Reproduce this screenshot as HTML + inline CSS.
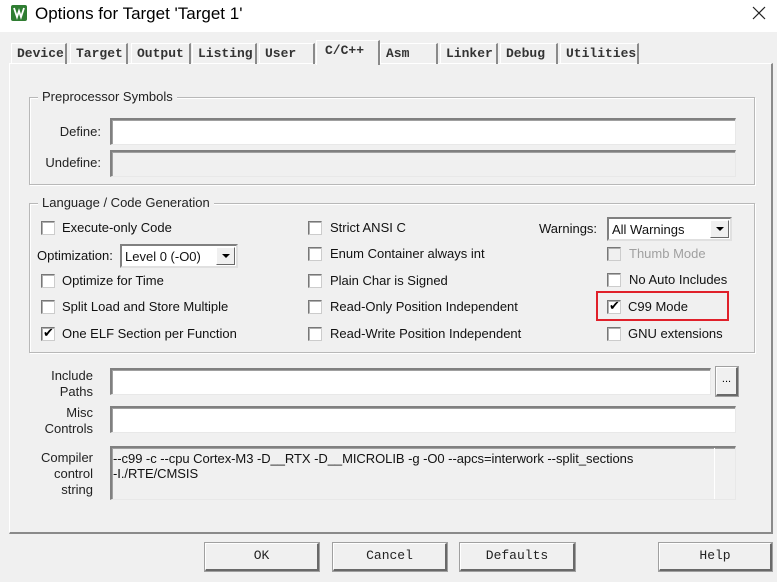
<!DOCTYPE html>
<html><head><meta charset="utf-8"><style>
*{margin:0;padding:0;box-sizing:border-box}
body{width:777px;height:582px;background:#f0f0f0;position:relative;overflow:hidden;font-family:"Liberation Sans",sans-serif;font-size:13px;color:#000;letter-spacing:0}
.a{position:absolute}
.title{left:0;top:0;width:777px;height:32px;background:#fff}
.tab{position:absolute;top:43px;height:21px;font-family:"Liberation Mono",monospace;font-size:13px;font-weight:bold;letter-spacing:0;padding-left:5px;line-height:20px;border-top:1px solid #fff;border-left:1px solid #fff;border-right:2px solid #8a8a8a;color:#333}
.grp{position:absolute;border:1px solid #b8b8b8;box-shadow:inset 1px 1px 0 #fff,1px 1px 0 #fff}
.lg{position:absolute;background:#f0f0f0;padding:0 4px;top:-9px;left:8px;color:#222}
.in{position:absolute;background:#fff;border-top:2px solid #808080;border-left:2px solid #808080;border-bottom:1px solid #e8e8e8;border-right:1px solid #e8e8e8;box-shadow:inset 1px 1px 0 #a0a0a0}
.cb{position:absolute;width:14px;height:14px;background:#fff;border:1px solid #777;border-right-color:#ccc;border-bottom-color:#ccc;box-shadow:inset 1px 1px 0 #b0b0b0}
.lbl{position:absolute;white-space:nowrap;color:#111}
.btn{position:absolute;border:1px solid #fff;border-right:2px solid #696969;border-bottom:2px solid #696969;outline:1px solid #a0a0a0;text-align:center;font-family:"Liberation Mono",monospace;font-size:13px;letter-spacing:0;line-height:24px;color:#222}
.rl{position:absolute;text-align:right;line-height:16px;width:60px;color:#222}
.combo{position:absolute;background:#fff;border:2px solid #808080;border-right-color:#e0e0e0;border-bottom-color:#e0e0e0}
.arr{position:absolute;right:1px;top:1px;width:19px;height:18px;background:#f0f0f0;border:1px solid #fff;border-right-color:#696969;border-bottom-color:#696969}
.arr:after{content:"";position:absolute;left:5px;top:6px;border-left:4px solid transparent;border-right:4px solid transparent;border-top:4px solid #000}
.ck:after{content:"✔";position:absolute;left:1px;top:-3px;font-size:13px;color:#000}
</style></head><body>
<div class="a title"></div>
<svg class="a" style="left:11px;top:5px" width="16" height="16" viewBox="0 0 16 16"><rect width="16" height="16" rx="2" fill="#2f7d32"/><path d="M3 3 L6 12 L8 6 L10 12 L13 3" stroke="#fff" stroke-width="1.8" fill="none"/></svg>
<div class="a" style="left:35px;top:4px;font-size:17px;letter-spacing:0;color:#000">Options for Target 'Target 1'</div>
<svg class="a" style="left:752px;top:6px" width="14" height="14"><path d="M1 1L13 13M13 1L1 13" stroke="#222" stroke-width="1.2"/></svg>

<div class="a" style="left:9px;top:63px;width:764px;height:471px;border-left:1px solid #fff;border-top:1px solid #fff;border-right:2px solid #8a8a8a;border-bottom:2px solid #8a8a8a"></div>
<div class="tab" style="left:11px;width:56px">Device</div>
<div class="tab" style="left:70px;width:58px">Target</div>
<div class="tab" style="left:131px;width:60px">Output</div>
<div class="tab" style="left:192px;width:65px">Listing</div>
<div class="tab" style="left:259px;width:56px">User</div>
<div class="tab" style="left:316px;top:40px;height:25px;width:64px;background:#f0f0f0;padding-left:8px;z-index:2">C/C++</div>
<div class="tab" style="left:380px;width:58px">Asm</div>
<div class="tab" style="left:440px;width:58px">Linker</div>
<div class="tab" style="left:500px;width:58px">Debug</div>
<div class="tab" style="left:560px;width:79px">Utilities</div>

<div class="grp" style="left:29px;top:97px;width:726px;height:88px"><span class="lg">Preprocessor Symbols</span></div>
<div class="rl" style="left:41px;top:124px">Define:</div>
<div class="in" style="left:110px;top:118px;width:626px;height:27px"></div>
<div class="rl" style="left:41px;top:155px">Undefine:</div>
<div class="in" style="left:110px;top:150px;width:626px;height:27px;background:#f0f0f0"></div>

<div class="grp" style="left:29px;top:203px;width:726px;height:150px"><span class="lg">Language / Code Generation</span></div>
<div class="cb" style="left:41px;top:221px"></div><div class="lbl" style="left:62px;top:220px">Execute-only Code</div>
<div class="lbl" style="left:37px;top:248px">Optimization:</div>
<div class="combo" style="left:120px;top:244px;width:118px;height:24px"><span class="lbl" style="left:3px;top:3px">Level 0 (-O0)</span><div class="arr"></div></div>
<div class="cb" style="left:41px;top:274px"></div><div class="lbl" style="left:62px;top:273px">Optimize for Time</div>
<div class="cb" style="left:41px;top:300px"></div><div class="lbl" style="left:62px;top:299px">Split Load and Store Multiple</div>
<div class="cb ck" style="left:41px;top:327px"></div><div class="lbl" style="left:62px;top:326px">One ELF Section per Function</div>

<div class="cb" style="left:308px;top:221px"></div><div class="lbl" style="left:330px;top:220px">Strict ANSI C</div>
<div class="cb" style="left:308px;top:247px"></div><div class="lbl" style="left:330px;top:246px">Enum Container always int</div>
<div class="cb" style="left:308px;top:274px"></div><div class="lbl" style="left:330px;top:273px">Plain Char is Signed</div>
<div class="cb" style="left:308px;top:300px"></div><div class="lbl" style="left:330px;top:299px">Read-Only Position Independent</div>
<div class="cb" style="left:308px;top:327px"></div><div class="lbl" style="left:330px;top:326px">Read-Write Position Independent</div>

<div class="lbl" style="left:539px;top:221px">Warnings:</div>
<div class="combo" style="left:607px;top:217px;width:125px;height:24px"><span class="lbl" style="left:3px;top:3px">All Warnings</span><div class="arr"></div></div>
<div class="cb" style="left:607px;top:247px;background:#f0f0f0"></div><div class="lbl" style="left:629px;top:246px;color:#a0a0a0">Thumb Mode</div>
<div class="cb" style="left:607px;top:273px"></div><div class="lbl" style="left:629px;top:272px">No Auto Includes</div>
<div class="cb ck" style="left:607px;top:300px"></div><div class="lbl" style="left:628px;top:299px">C99 Mode</div>
<div class="a" style="left:596px;top:291px;width:133px;height:30px;border:2px solid #e0202a"></div>
<div class="cb" style="left:607px;top:327px"></div><div class="lbl" style="left:628px;top:326px">GNU extensions</div>

<div class="rl" style="left:33px;top:368px">Include<br>Paths</div>
<div class="in" style="left:110px;top:368px;width:601px;height:27px"></div>
<div class="a" style="left:716px;top:367px;width:22px;height:29px;border:1px solid #fff;border-right:2px solid #696969;border-bottom:2px solid #696969;outline:1px solid #a0a0a0;font-size:11px;text-align:center;line-height:22px">...</div>
<div class="rl" style="left:33px;top:405px">Misc<br>Controls</div>
<div class="in" style="left:110px;top:406px;width:626px;height:27px"></div>
<div class="rl" style="left:33px;top:450px">Compiler<br>control<br>string</div>
<div class="in" style="left:110px;top:446px;width:626px;height:54px;background:#f0f0f0"></div>
<div class="a" style="left:714px;top:448px;width:1px;height:51px;background:#fff"></div>
<div class="lbl" style="left:113px;top:451px;line-height:15px;letter-spacing:-0.05px">--c99 -c --cpu Cortex-M3 -D__RTX -D__MICROLIB -g -O0 --apcs=interwork --split_sections<br>-I./RTE/CMSIS</div>

<div class="btn" style="left:205px;top:543px;width:114px;height:28px">OK</div>
<div class="btn" style="left:333px;top:543px;width:114px;height:28px">Cancel</div>
<div class="btn" style="left:460px;top:543px;width:115px;height:28px">Defaults</div>
<div class="btn" style="left:659px;top:543px;width:113px;height:28px">Help</div>
</body></html>
